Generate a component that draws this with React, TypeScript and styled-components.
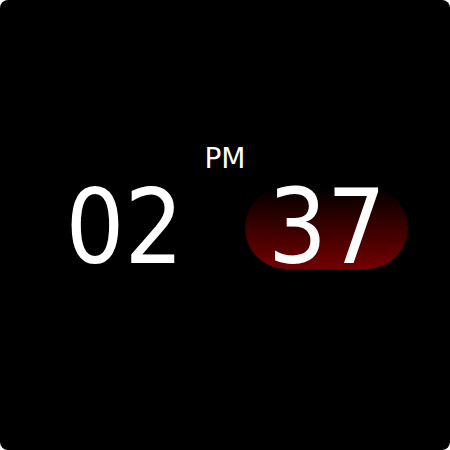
import React from "react";
import styled, { createGlobalStyle } from "styled-components";

const GlobalStyle = createGlobalStyle`
  html, body {
    margin: 0;
    padding: 0;
    background: #fff;
  }
  body {
    font-family: "DejaVu Sans Condensed", "DejaVu Sans", sans-serif;
  }
`;

const Screen = styled.div`
  width: 450px;
  height: 450px;
  background: #000;
  border-radius: 8px;
  color: #fff;
  display: flex;
  flex-direction: column;
  align-items: center;
  padding-top: 145px;
  box-sizing: border-box;
`;

const Meridiem = styled.div`
  font-family: "DejaVu Sans", sans-serif;
  font-size: 28px;
  line-height: 28px;
  margin-bottom: 14px;
`;

const TimeRow = styled.div`
  display: flex;
  align-items: center;
  gap: 62px;
  padding-left: 24px;
`;

const Digits = styled.div<{ $active?: boolean }>`
  font-size: 103px;
  line-height: 82px;
  height: 82px;
  padding-bottom: 3px;
  box-sizing: border-box;
  display: flex;
  align-items: center;
  justify-content: center;
  ${({ $active }) =>
    $active &&
    `
    width: 163px;
    border-radius: 41px;
    background: linear-gradient(to bottom, #000 0%, #3a0000 50%, #740000 100%);
  `}
`;

const App = () => {
  const hours = "02";
  const minutes = "37";
  return (
    <>
      <GlobalStyle />
      <Screen>
        <Meridiem>PM</Meridiem>
        <TimeRow>
          <Digits>{hours}</Digits>
          <Digits $active>{minutes}</Digits>
        </TimeRow>
      </Screen>
    </>
  );
};

export default App;
